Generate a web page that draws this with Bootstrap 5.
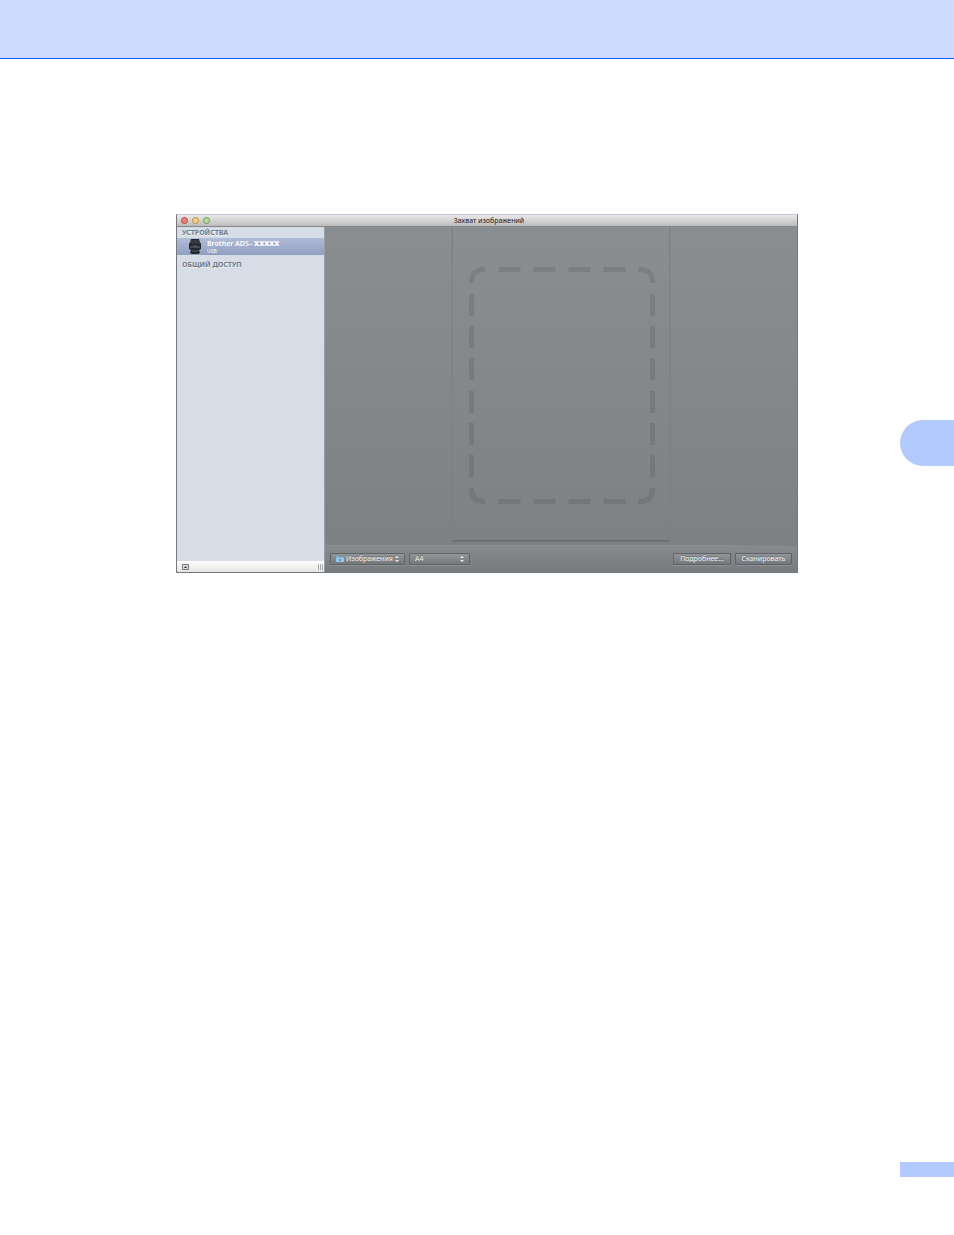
<!DOCTYPE html>
<html lang="ru">
<head>
<meta charset="utf-8">
<meta name="viewport" content="width=device-width, initial-scale=1">
<title>Захват изображений</title>
<link href="https://cdn.jsdelivr.net/npm/bootstrap@5.3.0/dist/css/bootstrap.min.css" rel="stylesheet">
<style>
  body { font-family: "Noto Sans", "Open Sans", sans-serif; font-size: 7px; line-height: 10px; }
  .page-band { height: 59px; background: #ccdbff; border-bottom: 1px solid #0b5cff; }
  .page-content { padding: 155px 102px 0 176px; }
  .page-rail { width: 54px; padding: 361px 0 58px; }
  .chapter-tab { height: 46px; background: #b3caff; border-radius: 23px 0 0 23px; }
  .page-mark { height: 15px; background: #b3caff; }

  .app-window { border: 1px solid #77777f; border-top-color: #c5c5d6; }
  .title-bar { height: 12px; background: linear-gradient(#e9e9e9, #bcbcbc); border-bottom: 1px solid #85878a; color: #222; }
  .title-bar h1 { font: inherit; line-height: 12px; }
  .lamps { padding-left: 4px; }
  .lamp { width: 7px; height: 7px; border: 1px solid; border-radius: 50%; padding: 0; }
  .lamp-red { background: #f08078; border-color: #b5433f; }
  .lamp-amber { background: #f7d27c; border-color: #b98a3c; }
  .lamp-green { background: #b6dc94; border-color: #6d9a52; }

  .side-bar { width: 148px; background: #d7dde6; border-right: 1px solid #9a9ea5; }
  .side-bar h2 { font-size: 7px; line-height: 11px; font-weight: 700; color: #6e7b8c; padding-left: 5px; text-shadow: 0 1px #eef1f5; }
  .device { height: 17px; padding-left: 11px; gap: 5px; line-height: 8px; font-weight: 600; color: #fff; background: linear-gradient(#b1bdd7, #8f9fc1); }
  .device:hover { color: #fff; }
  .device-port { font-size: 5px; line-height: 6px; font-weight: 400; }
  .side-foot { height: 11px; background: linear-gradient(#fff, #e4e4e4); padding: 0 1px 0 5px; }

  .stage { background: linear-gradient(#8a8e90, #7c8082); }
  .sheet { width: 218px; height: 314px; border: 1px solid #7d8183; border-top: 0; border-bottom-color: #686c6e; box-shadow: 0 1px 1px #74787a; }
  .tool-bar { height: 26px; padding: 7px 5px 0; gap: 4px; background: linear-gradient(#878b8d, #777b7d); }
  .tool-rule { height: 1px; margin: 4px 12px 0 0; background: linear-gradient(90deg, #8f9395 80%, #7e8284); }
  .tool { height: 12px; font-size: 7px; line-height: 10px; color: #f4f4f4; padding: 0 5px; border: 1px solid #5f6365; border-radius: 1px; background: linear-gradient(#929698, #74787a); box-shadow: 0 1px #8d9193; text-shadow: 0 -1px #686c6e; }
  .tool select { appearance: none; border: 0; padding: 0; background: none; color: inherit; font: inherit; line-height: 10px; height: 10px; text-shadow: inherit; min-width: 0; }
  .tool option { color: #222; }
  .tool-folder { width: 75px; gap: 2px; }
  .tool-size { width: 61px; }
  .tool-more { width: 58px; }
  .tool-scan { width: 57px; }
</style>
</head>
<body class="d-flex flex-column min-vh-100 bg-white">
<header class="page-band flex-shrink-0"></header>
<div class="d-flex flex-grow-1">
  <main class="page-content flex-grow-1">
    <section class="app-window d-flex flex-column">
      <div class="title-bar d-flex align-items-center">
        <div class="lamps d-flex gap-1 col align-items-center">
          <button class="lamp lamp-red" type="button" aria-label="Закрыть"></button>
          <button class="lamp lamp-amber" type="button" aria-label="Свернуть"></button>
          <button class="lamp lamp-green" type="button" aria-label="Развернуть"></button>
        </div>
        <h1 class="m-0">Захват изображений</h1>
        <div class="col"></div>
      </div>
      <div class="d-flex">
        <nav class="side-bar d-flex flex-column flex-shrink-0">
          <h2 class="m-0">УСТРОЙСТВА</h2>
          <a class="device d-flex align-items-center text-decoration-none" href="#scanner">
            <svg width="14" height="17" viewBox="0 0 14 17" aria-hidden="true">
              <path d="M3 1H11L12 5H13V11L11 12L12 15L10 16H4L2 15L3 12L1 11V5H2Z" fill="#24272b"/>
              <path d="M3 2H11L12 6H2Z" fill="#34383c"/>
              <path d="M2 8H12V10H2Z" fill="#474b50"/>
              <path d="M5 8H9M4 13H10" stroke="#5b5f64"/>
            </svg>
            <span class="d-flex flex-column">
              <span>Brother ADS– <b>XXXXX</b></span>
              <span class="device-port">USB</span>
            </span>
          </a>
          <h2 class="m-0 mt-1">ОБЩИЙ ДОСТУП</h2>
          <div class="side-foot d-flex align-items-center justify-content-between mt-auto">
            <svg width="7" height="7" viewBox="0 0 7 7" aria-hidden="true">
              <path d="M.5 1.5H6.5V6.5H.5Z" fill="#ddd" stroke="#777"/>
              <path d="M2 5L3.500 3L5 5Z" fill="#333"/>
            </svg>
            <svg width="5" height="6" viewBox="0 0 5 6" aria-hidden="true">
              <path d="M.5 0V6M2.500 0V6M4.500 0V6" stroke="#aaa"/>
            </svg>
          </div>
        </nav>
        <div class="stage flex-grow-1 d-flex flex-column">
          <div class="sheet mx-auto">
            <svg width="216" height="313" viewBox="0 0 216 313" fill="none" stroke="#000" stroke-opacity=".09" stroke-width="5" aria-hidden="true">
              <path d="M18.500 56V55Q18.500 42.500 31 42.500H32M185 42.500H186Q199.500 42.500 199.500 55V56M199.500 261V262Q199.500 274.500 187 274.500H185M32 274.500H31Q18.500 274.500 18.500 262V261"/>
              <path d="M45.500 42.500h22m13 0h22m13 0h22m13 0h22M45.500 274.500h22m13 0h22m13 0h22m13 0h22"/>
              <path d="M18.500 67v22m0 10v22m0 10v22m0 11v22m0 10v22m0 10v22M199.500 67v22m0 10v22m0 10v22m0 11v22m0 10v22m0 10v22"/>
            </svg>
          </div>
          <div class="tool-rule"></div>
          <div class="tool-bar d-flex">
            <label class="tool tool-folder d-flex align-items-center">
              <svg class="flex-shrink-0" width="8" height="6" viewBox="0 0 8 6" aria-hidden="true">
                <path d="M0 0H3L4 1H8V6H0Z" fill="#79b5dc"/>
                <path d="M0 2H8V6H0Z" fill="#92c7e7"/>
                <path d="M3 3H5V5H3Z" fill="#5995bd"/>
              </svg>
              <select class="flex-grow-1" aria-label="Папка для сканов"><option>Изображения</option></select>
              <svg class="flex-shrink-0" width="4" height="6" viewBox="0 0 4 6" aria-hidden="true"><path d="M0 2L2 0L4 2ZM0 4L2 6L4 4Z" fill="#eee"/></svg>
            </label>
            <label class="tool tool-size d-flex align-items-center">
              <select class="flex-grow-1" aria-label="Размер листа"><option>A4</option></select>
              <svg class="flex-shrink-0" width="4" height="6" viewBox="0 0 4 6" aria-hidden="true"><path d="M0 2L2 0L4 2ZM0 4L2 6L4 4Z" fill="#eee"/></svg>
            </label>
            <button class="tool tool-more ms-auto text-nowrap" type="button">Подробнее...</button>
            <button class="tool tool-scan text-nowrap" type="button">Сканировать</button>
          </div>
        </div>
      </div>
    </section>
  </main>
  <aside class="page-rail d-flex flex-column justify-content-between flex-shrink-0">
    <div class="chapter-tab"></div>
    <div class="page-mark"></div>
  </aside>
</div>
<script src="https://cdn.jsdelivr.net/npm/bootstrap@5.3.0/dist/js/bootstrap.bundle.min.js"></script>
</body>
</html>
